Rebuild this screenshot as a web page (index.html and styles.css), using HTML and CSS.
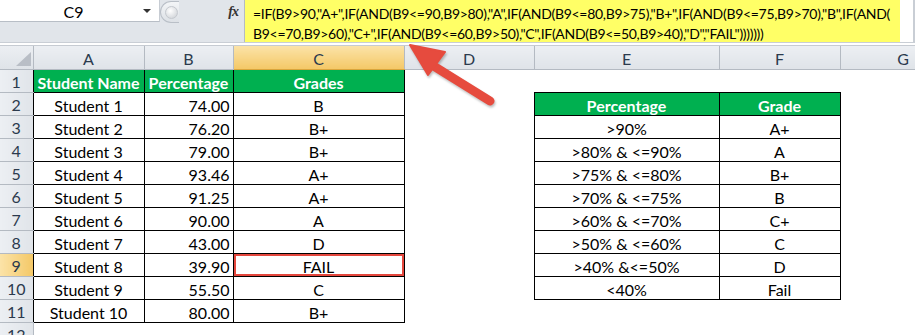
FILE: index.html
```html
<!DOCTYPE html>
<html>
<head>
<meta charset="utf-8">
<link rel="stylesheet" href="styles.css">
</head>
<body>
<div class="app">
  <div class="fbar">
    <div class="namecol">
      <div class="namebox"><span class="nametext">C9</span><span class="dd"></span></div>
      <div class="namegap"></div>
    </div>
    <div class="mid">
      <div class="pill"><div class="knob"></div></div>
      <div class="fx">fx</div>
    </div>
    <div class="formula">=IF(B9&gt;90,"A+",IF(AND(B9&lt;=90,B9&gt;80),"A",IF(AND(B9&lt;=80,B9&gt;75),"B+",IF(AND(B9&lt;=75,B9&gt;70),"B",IF(AND(<br>B9&lt;=70,B9&gt;60),"C+",IF(AND(B9&lt;=60,B9&gt;50),"C",IF(AND(B9&lt;=50,B9&gt;40),"D","FAIL")))))))</div>
    <div class="fend"></div>
  </div>
  <div class="sep"></div>
  <table class="sheet">
    <colgroup>
      <col class="c-rh"><col class="c-a"><col class="c-b"><col class="c-c"><col class="c-d"><col class="c-e"><col class="c-f"><col class="c-g">
    </colgroup>
    <tr class="hdr">
      <th class="corner"><span class="tri"></span></th><th>A</th><th>B</th><th class="hsel">C</th><th>D</th><th>E</th><th>F</th><th>G</th>
    </tr>
    <tr><th class="rh">1</th><td class="b g first">Student Name</td><td class="b g">Percentage</td><td class="b g">Grades</td><td></td><td></td><td></td><td></td></tr>
    <tr><th class="rh">2</th><td class="b first">Student 1</td><td class="b num">74.00</td><td class="b">B</td><td></td><td class="b g">Percentage</td><td class="b g">Grade</td><td></td></tr>
    <tr><th class="rh">3</th><td class="b first">Student 2</td><td class="b num">76.20</td><td class="b">B+</td><td></td><td class="b">&gt;90%</td><td class="b">A+</td><td></td></tr>
    <tr><th class="rh">4</th><td class="b first">Student 3</td><td class="b num">79.00</td><td class="b">B+</td><td></td><td class="b">&gt;80% &amp; &lt;=90%</td><td class="b">A</td><td></td></tr>
    <tr><th class="rh">5</th><td class="b first">Student 4</td><td class="b num">93.46</td><td class="b">A+</td><td></td><td class="b">&gt;75% &amp; &lt;=80%</td><td class="b">B+</td><td></td></tr>
    <tr><th class="rh">6</th><td class="b first">Student 5</td><td class="b num">91.25</td><td class="b">A+</td><td></td><td class="b">&gt;70% &amp; &lt;=75%</td><td class="b">B</td><td></td></tr>
    <tr><th class="rh">7</th><td class="b first">Student 6</td><td class="b num">90.00</td><td class="b">A</td><td></td><td class="b">&gt;60% &amp; &lt;=70%</td><td class="b">C+</td><td></td></tr>
    <tr><th class="rh">8</th><td class="b first">Student 7</td><td class="b num">43.00</td><td class="b">D</td><td></td><td class="b">&gt;50% &amp; &lt;=60%</td><td class="b">C</td><td></td></tr>
    <tr><th class="rh rsel">9</th><td class="b first">Student 8</td><td class="b num">39.90</td><td class="b sel">FAIL</td><td></td><td class="b">&gt;40% &amp;&lt;=50%</td><td class="b">D</td><td></td></tr>
    <tr><th class="rh">10</th><td class="b first">Student 9</td><td class="b num">55.50</td><td class="b">C</td><td></td><td class="b">&lt;40%</td><td class="b">Fail</td><td></td></tr>
    <tr><th class="rh">11</th><td class="b first">Student 10</td><td class="b num">80.00</td><td class="b">B+</td><td></td><td></td><td></td><td></td></tr>
    <tr><th class="rh last">12</th><td></td><td></td><td></td><td></td><td></td><td></td><td></td></tr>
  </table>
  <svg class="arrow" width="915" height="335" viewBox="0 0 915 335">
    <line x1="490" y1="101" x2="432" y2="65" stroke="#e64b3e" stroke-width="9" stroke-linecap="round"/>
    <polygon points="410,45 445,52 428,75" fill="#e64b3e" stroke="#e64b3e" stroke-width="2" stroke-linejoin="round"/>
  </svg>
</div>
</body>
</html>
```
FILE: styles.css
```css
html, body {
  margin: 0;
  padding: 0;
  background: #ffffff;
  overflow: hidden;
}
.app {
  position: relative;
  width: 915px;
  height: 335px;
  overflow: hidden;
  font-family: Lato, "Liberation Sans", sans-serif;
  color: #000;
}
.fbar {
  display: flex;
  height: 43px;
  background: #e1e5ea;
  border-bottom: 1px solid #c9ced5;
  box-sizing: border-box;
}
.namecol {
  width: 160px;
  display: flex;
  flex-direction: column;
}
.namebox {
  height: 22px;
  background: #fff;
  border-bottom: 1px solid #b8bec6;
  border-right: 1px solid #c7ccd3;
  display: flex;
  align-items: center;
  position: relative;
  box-sizing: border-box;
}
.nametext {
  flex: 1;
  text-align: center;
  font-size: 16px;
  padding-left: 4px;
  padding-top: 1px;
}
.dd {
  width: 0;
  height: 0;
  border-left: 4px solid transparent;
  border-right: 4px solid transparent;
  border-top: 4px solid #333;
  margin-right: 8px;
}
.namegap { flex: 1; }
.mid {
  width: 85px;
  position: relative;
  display: flex;
  align-items: flex-start;
  justify-content: flex-end;
  box-sizing: border-box;
  border-right: 1px solid #b5bbc3;
}
.pill {
  position: absolute;
  left: 0;
  top: 1px;
  width: 18px;
  height: 20px;
  border: 1px solid #b9bfc7;
  border-right: none;
  border-radius: 11px 0 0 11px;
  background: linear-gradient(#f3f5f7, #dde1e6);
}
.knob {
  position: absolute;
  left: 4px;
  top: 4px;
  width: 11px;
  height: 11px;
  border-radius: 50%;
  background: radial-gradient(circle at 40% 35%, #ffffff, #c9cdd2);
  border: 1px solid #c4c8ce;
}
.fx {
  font-family: "Liberation Serif", serif;
  font-style: italic;
  font-weight: bold;
  font-size: 14px;
  color: #333;
  margin: 4px 6px 0 0;
  letter-spacing: -1px;
}
.formula {
  width: 655px;
  background: #ffff66;
  font-size: 14px;
  line-height: 19.5px;
  padding: 4px 0 0 8px;
  box-sizing: border-box;
  white-space: nowrap;
  letter-spacing: -0.3px;
}
.fend {
  flex: 1;
  background: #fff;
  border-right: 2px solid #c9ced5;
}
.sep {
  background: #fff;
  border-bottom: 1px solid #c6cbd2;
  height: 2px;
}
.sheet {
  border-collapse: collapse;
  table-layout: fixed;
  width: 966px;
}
.c-rh { width: 33px; }
.c-a { width: 111px; }
.c-b { width: 89px; }
.c-c { width: 171px; }
.c-d { width: 130px; }
.c-e { width: 185px; }
.c-f { width: 121px; }
.c-g { width: 126px; }
.sheet tr { height: 23px; }
.sheet th, .sheet td {
  padding: 0;
  font-size: 16px;
  font-weight: normal;
  text-align: center;
  vertical-align: middle;
  white-space: nowrap;
  overflow: hidden;
}
.hdr th {
  background: linear-gradient(#eceff3, #dfe3e8);
  border-right: 1px solid #b4bac2;
  border-bottom: 1px solid #b4bac2;
  color: #2b3a4d;
  height: 22px;
  padding-top: 1px;
}
.hdr th.hsel {
  background: linear-gradient(#fbe3a8, #f4c867);
  border-bottom-color: #d9a53c;
}
.corner { position: relative; }
.tri {
  position: absolute;
  right: 2px;
  bottom: 3px;
  width: 0;
  height: 0;
  border-left: 15px solid transparent;
  border-bottom: 14px solid #b9bec6;
}
.rh {
  background: linear-gradient(90deg, #eceff3, #e0e4e9);
  color: #2b3a4d;
  border-bottom: 1px solid #b4bac2;
  padding-top: 1px !important;
}
.rh.last { border-right: 1px solid #b4bac2; }
.rh.rsel { background: linear-gradient(90deg, #fbe3a8, #f4c867); }
td { padding-top: 2px !important; }
td.b { border: 1px solid #000; }
td.g {
  background: #00b050;
  color: #fff;
  font-weight: bold;
}
td.num {
  text-align: right;
  padding-right: 3px !important;
}
td.sel { position: relative; }
td.sel::after {
  content: "";
  position: absolute;
  left: -1px;
  top: -1px;
  right: -1px;
  bottom: -1px;
  border: 3px solid #e5473d;
}
.arrow {
  position: absolute;
  left: 0;
  top: 0;
  pointer-events: none;
  filter: drop-shadow(1px 2px 1px rgba(0, 0, 0, 0.25));
}
```
